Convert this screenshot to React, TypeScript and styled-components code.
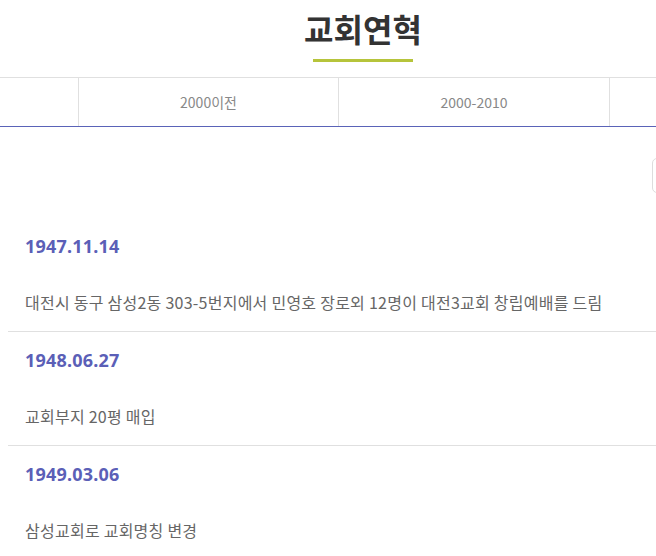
import React from "react";
import styled, { createGlobalStyle } from "styled-components";

const Global = createGlobalStyle`
  html, body { margin: 0; padding: 0; background: #fff; overflow: hidden; }
  body { font-family: "Noto Sans", "Noto Sans CJK KR", sans-serif; }
  * { box-sizing: border-box; }
`;

const Page = styled.div`
  width: 726px;
`;

const Header = styled.header`
  height: 77px;
  display: flex;
  flex-direction: column;
  align-items: center;
  padding-top: 7px;
`;

const Title = styled.h1`
  margin: 0;
  font-family: "Noto Sans CJK KR", sans-serif;
  font-size: 32px;
  font-weight: 700;
  line-height: 42px;
  color: #333;
`;

const Accent = styled.span`
  display: block;
  width: 100px;
  height: 3px;
  margin-top: 10px;
  background: #b6c43b;
`;

const TabBar = styled.nav`
  display: grid;
  grid-template-columns: 78px 260px 271px 1fr;
  height: 50px;
  border-top: 1px solid #e0e0e0;
  border-bottom: 1px solid #5a63b8;
`;

const Tab = styled.div<{ $first?: boolean }>`
  display: flex;
  align-items: center;
  justify-content: center;
  border-left: ${(p) => (p.$first ? "none" : "1px solid #e0e0e0")};
  font-family: "Noto Sans CJK KR", sans-serif;
  font-size: 14px;
  color: #888;
`;

const Toolbar = styled.div`
  height: 91px;
  display: flex;
  justify-content: flex-end;
  padding-top: 31px;
`;

const SelectBox = styled.div`
  width: 74px;
  height: 35px;
  border: 1px solid #ddd;
  border-radius: 5px;
  background: #fff;
`;

const List = styled.ul`
  list-style: none;
  margin: 0 0 0 8px;
  padding: 0;
`;

const Item = styled.li`
  padding: 16px 17px 17px;
  border-bottom: 1px solid #e0e0e0;
`;

const DateText = styled.div`
  font-family: "Noto Sans", "Noto Sans CJK KR", sans-serif;
  font-size: 18px;
  font-weight: 700;
  line-height: 24px;
  letter-spacing: 0.2px;
  color: #5b5fb7;
`;

const Desc = styled.p`
  margin: 32px 0 0;
  font-family: "Noto Sans CJK KR", sans-serif;
  font-size: 16px;
  line-height: 24px;
  letter-spacing: 0.25px;
  color: #666;
`;

const items = [
  { date: "1947.11.14", text: "대전시 동구 삼성2동 303-5번지에서 민영호 장로외 12명이 대전3교회 창립예배를 드림" },
  { date: "1948.06.27", text: "교회부지 20평 매입" },
  { date: "1949.03.06", text: "삼성교회로 교회명칭 변경" },
];

export default function App() {
  return (
    <Page>
      <Global />
      <Header>
        <Title>교회연혁</Title>
        <Accent />
      </Header>
      <TabBar>
        <Tab $first />
        <Tab>2000이전</Tab>
        <Tab>2000-2010</Tab>
        <Tab />
      </TabBar>
      <Toolbar>
        <SelectBox />
      </Toolbar>
      <List>
        {items.map((it) => (
          <Item key={it.date}>
            <DateText>{it.date}</DateText>
            <Desc>{it.text}</Desc>
          </Item>
        ))}
      </List>
    </Page>
  );
}
